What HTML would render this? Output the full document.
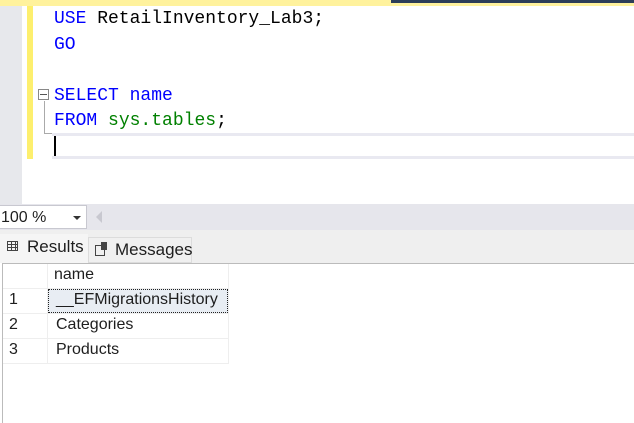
<!DOCTYPE html>
<html><head><style>
body{margin:0;width:634px;height:423px;overflow:hidden;background:#fff;position:relative;font-family:"Liberation Sans",sans-serif}
div{position:absolute;box-sizing:border-box}
.code{font-family:"Liberation Mono",monospace;font-size:18px;left:54px;white-space:pre;line-height:25px}
.k{color:#0000ff}.g{color:#008000}
.t{font-size:16px;color:#1e1e1e}
</style></head><body>
<div style="left:0;top:0;width:634px;height:6px;background:#fff29d"></div>
<div style="left:391px;top:0;width:243px;height:3px;background:#2c3e58"></div>
<div style="left:0;top:6px;width:22px;height:198px;background:#e7e8ec"></div>
<div style="left:27px;top:6px;width:6px;height:153px;background:#fdef6e"></div>
<div style="left:52px;top:133px;width:582px;height:26px;border-top:3px solid #e9e9f1;border-bottom:3px solid #e9e9f1"></div>
<div style="left:54px;top:136px;width:2px;height:20px;background:#000"></div>
<div class="code" style="top:7px"><span class="k">USE</span> RetailInventory_Lab3;</div>
<div class="code" style="top:33px"><span class="k">GO</span></div>
<div class="code" style="top:84px"><span class="k">SELECT name</span></div>
<div class="code" style="top:109px"><span class="k">FROM</span> <span class="g">sys.tables</span>;</div>
<div style="left:38px;top:89px;width:11px;height:11px;border:1px solid #888;background:#fff"></div>
<div style="left:40px;top:94px;width:7px;height:1px;background:#555"></div>
<div style="left:44px;top:101px;width:1px;height:33px;background:#aaa"></div>
<div style="left:44px;top:133px;width:8px;height:1px;background:#aaa"></div>
<div style="left:0;top:204px;width:634px;height:26px;background:#e6e6ec"></div>
<div style="left:0;top:205px;width:87px;height:24px;background:#fff;border:1px solid #c8c8d0;border-left:none"></div>
<div class="t" style="left:1px;top:209px;font-size:16px">100 %</div>
<div style="left:73px;top:216px;width:0;height:0;border-left:4px solid transparent;border-right:4px solid transparent;border-top:4px solid #333"></div>
<div style="left:96px;top:211px;width:0;height:0;border-top:6px solid transparent;border-bottom:6px solid transparent;border-right:6px solid #c8c8d0"></div>
<div style="left:0;top:230px;width:634px;height:33px;background:#efefef"></div>
<div style="left:0;top:234px;width:88px;height:29px;background:#f5f5f5"></div>
<div style="left:88px;top:237px;width:104px;height:26px;border:1px solid #dcdcdc;background:#f0f0f0"></div>
<div style="left:7px;top:241px;width:11px;height:10px;border:1px solid #444;background:repeating-linear-gradient(90deg,transparent 0 3px,#444 3px 4px),repeating-linear-gradient(0deg,transparent 0 2px,#444 2px 3px)"></div>
<div class="t" style="left:27px;top:237px;font-size:17px">Results</div>
<div style="left:95px;top:245px;width:10px;height:11px;border:1px solid #444"></div>
<div style="left:101px;top:242px;width:6px;height:8px;background:#444"></div>
<div class="t" style="left:115px;top:240px;font-size:17px">Messages</div>
<div style="left:2px;top:263px;width:632px;height:160px;background:#fff;border-left:1px solid #bbb;border-top:1px solid #bbb"></div>
<div style="left:3px;top:264px;width:226px;height:100px;border-right:1px solid #eee"></div>
<div style="left:47px;top:264px;width:1px;height:100px;background:#eee"></div>
<div style="left:3px;top:288px;width:226px;height:1px;background:#eee"></div>
<div style="left:3px;top:313px;width:226px;height:1px;background:#eee"></div>
<div style="left:3px;top:338px;width:226px;height:1px;background:#eee"></div>
<div style="left:3px;top:363px;width:226px;height:1px;background:#eee"></div>
<div style="left:48px;top:289px;width:180px;height:24px;background:#e8edf3;border:1px dotted #222"></div>
<div class="t" style="left:54px;top:266px">name</div>
<div class="t" style="left:9px;top:291px">1</div>
<div class="t" style="left:56px;top:291px">__EFMigrationsHistory</div>
<div class="t" style="left:9px;top:316px">2</div>
<div class="t" style="left:56px;top:316px">Categories</div>
<div class="t" style="left:9px;top:341px">3</div>
<div class="t" style="left:56px;top:341px">Products</div>
</body></html>
